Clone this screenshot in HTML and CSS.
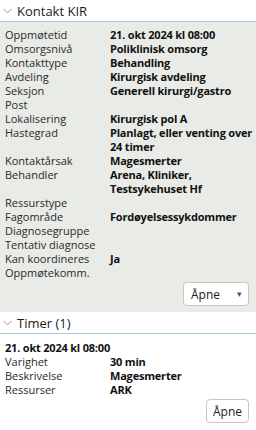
FILE: index.html
```html
<!DOCTYPE html>
<html lang="no">
<head>
  <meta charset="UTF-8">
  <meta name="viewport" content="width=device-width, initial-scale=1.0">
  <title>Kontakt KIR</title>
  <link rel="stylesheet" href="styles.css">
</head>
<body>
  <!-- Kontakt -->
  <section class="group">
    <div class="group-head">
      <svg class="chevron" width="9" height="6" viewBox="0 0 9 6"><path d="M0.5 0.8 L4.5 4.8 L8.5 0.8" fill="none" stroke="#9a9a9a" stroke-width="1"/></svg>
      <span>Kontakt KIR</span>
    </div>
    <div class="group-body shaded">
      <div class="fields">
        <div class="label">Oppmøtetid</div><div class="value">21. okt 2024 kl 08:00</div>
        <div class="label">Omsorgsnivå</div><div class="value">Poliklinisk omsorg</div>
        <div class="label">Kontakttype</div><div class="value">Behandling</div>
        <div class="label">Avdeling</div><div class="value">Kirurgisk avdeling</div>
        <div class="label">Seksjon</div><div class="value">Generell kirurgi/gastro</div>
        <div class="label">Post</div><div class="value"></div>
        <div class="label">Lokalisering</div><div class="value">Kirurgisk pol A</div>
        <div class="label">Hastegrad</div><div class="value">Planlagt, eller venting over 24 timer</div>
        <div class="label">Kontaktårsak</div><div class="value">Magesmerter</div>
        <div class="label">Behandler</div><div class="value">Arena, Kliniker, Testsykehuset Hf</div>
        <div class="label">Ressurstype</div><div class="value"></div>
        <div class="label">Fagområde</div><div class="value">Fordøyelsessykdommer</div>
        <div class="label">Diagnosegruppe</div><div class="value"></div>
        <div class="label">Tentativ diagnose</div><div class="value"></div>
        <div class="label">Kan koordineres</div><div class="value">Ja</div>
        <div class="label">Oppmøtekomm.</div><div class="value"></div>
      </div>
      <div class="actions">
        <button class="btn btn-menu">Åpne <span class="caret">▾</span></button>
      </div>
    </div>
  </section>

  <!-- Timer -->
  <section class="group">
    <div class="group-head">
      <svg class="chevron" width="9" height="6" viewBox="0 0 9 6"><path d="M0.5 0.8 L4.5 4.8 L8.5 0.8" fill="none" stroke="#9a9a9a" stroke-width="1"/></svg>
      <span>Timer (1)</span>
    </div>
    <div class="group-body">
      <div class="appt-title">21. okt 2024 kl 08:00</div>
      <div class="fields">
        <div class="label">Varighet</div><div class="value">30 min</div>
        <div class="label">Beskrivelse</div><div class="value">Magesmerter</div>
        <div class="label">Ressurser</div><div class="value">ARK</div>
      </div>
      <div class="actions">
        <button class="btn">Åpne</button>
      </div>
    </div>
  </section>
</body>
</html>
```

FILE: styles.css
```css
body {
  margin: 0;
  width: 256px;
  background: #ffffff;
  color: #222222;
  font-family: "Open Sans", "Noto Sans", sans-serif;
  font-size: 11px;
  -webkit-font-smoothing: antialiased;
}

.group-head {
  display: flex;
  align-items: center;
  gap: 5px;
  height: 21px;
  padding-left: 3px;
  border-bottom: 1px solid #a6c8df;
  font-size: 13px;
  color: #1b1b1b;
}

.chevron {
  flex: none;
  margin-top: 1px;
}

.group-body {
  padding: 6px 7px 6px 5px;
}

.group-body.shaded {
  background: #e8ebe6;
}

.fields {
  display: grid;
  grid-template-columns: 105px 1fr;
  line-height: 14px;
  margin-right: -7px;
}

.label {
  color: #2a2a2a;
}

.value {
  font-weight: 700;
  color: #111111;
  letter-spacing: -0.2px;
}

.appt-title {
  font-weight: 700;
  color: #111111;
  letter-spacing: -0.2px;
  line-height: 14px;
  margin-top: 1px;
}

.actions {
  display: flex;
  justify-content: flex-end;
  margin-top: 2px;
}

.btn {
  height: 24px;
  padding: 0 6px;
  background: #ffffff;
  border: 1px solid #c6c6c6;
  border-radius: 4px;
  font-family: inherit;
  font-size: 12px;
  color: #1b1b1b;
}

.btn-menu {
  width: 66px;
  text-align: left;
  padding-left: 7px;
}

.caret {
  float: right;
  font-size: 9px;
  color: #555555;
  margin-top: 1px;
}
```
